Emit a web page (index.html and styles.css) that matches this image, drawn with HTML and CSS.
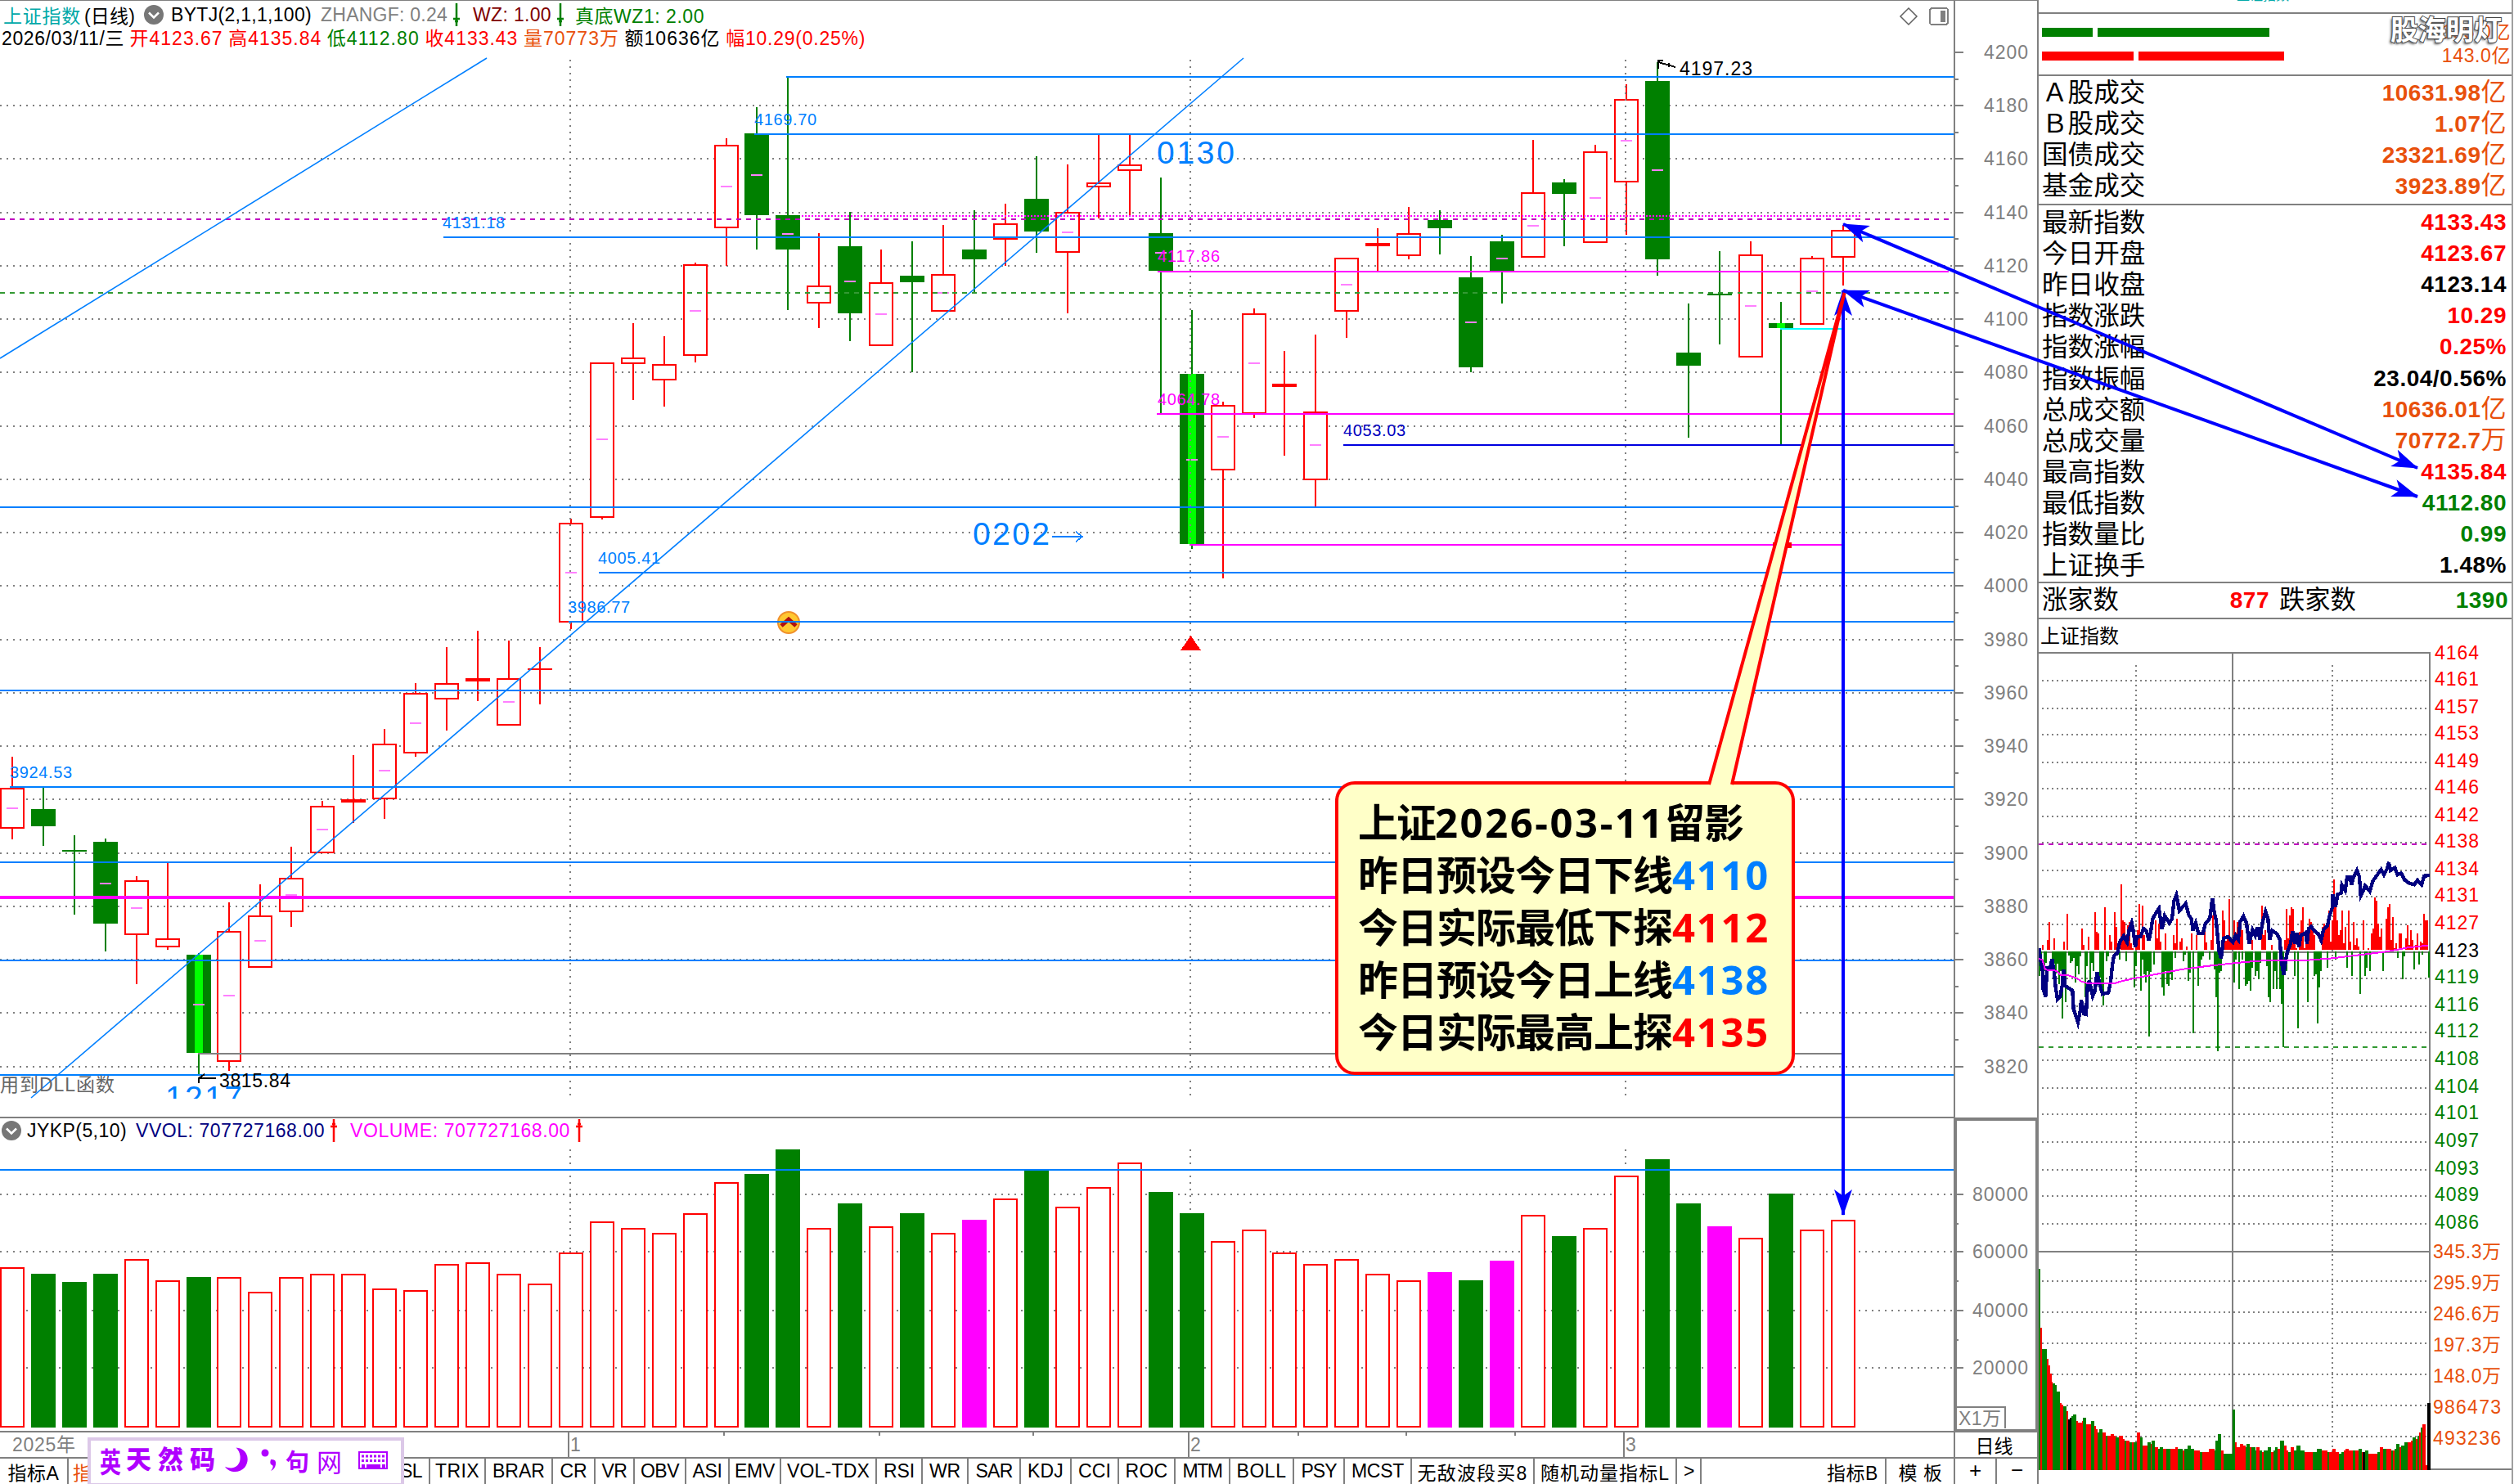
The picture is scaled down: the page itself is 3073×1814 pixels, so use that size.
FILE: index.html
```html
<!DOCTYPE html>
<html lang="zh-CN">
<head>
    <meta charset="UTF-8">
    <meta name="viewport" content="width=device-width, initial-scale=1.0">
    <title>上证指数 (日线)</title>
    <link rel="stylesheet" href="styles.css">
</head>
<body>
    <div class="app">
        <section class="panel main-panel">
            <svg id="kline" class="plot" viewBox="0 1 2388 1364" width="2388" height="1364"></svg>
            <div class="legend">
                <div class="legend-row">
                    <span class="teal" data-w="95">上证指数</span>
                    <span class="ml-4" data-w="62">(日线)</span>
                    <svg class="drop ml-11" viewBox="0 0 24 24"><circle cx="12" cy="12" r="12"/><path d="M6 9.500l6 6 6-6"/></svg>
                    <span class="ml-9" data-w="172">BYTJ(2,1,1,100)</span>
                    <span class="gray ml-11" data-w="155">ZHANGF: 0.24</span>
                    <svg class="arrow green ml-4" viewBox="0 0 14 28"><path d="M7 0v28M3 19h8M5 22h4"/></svg>
                    <span class="maroon ml-13" data-w="96">WZ: 1.00</span>
                    <svg class="arrow green ml-4" viewBox="0 0 14 28"><path d="M7 0v28M3 19h8M5 22h4"/></svg>
                    <span class="green ml-11" data-w="158">真底WZ1: 2.00</span>
                </div>
                <div class="legend-row quote">
                    <span data-w="150">2026/03/11/三</span>
                    <span class="red" data-w="114">开4123.67</span>
                    <span class="red" data-w="114">高4135.84</span>
                    <span class="green" data-w="113">低4112.80</span>
                    <span class="red" data-w="114">收4133.43</span>
                    <span class="orange" data-w="117">量70773万</span>
                    <span data-w="117">额10636亿</span>
                    <span class="red" data-w="171">幅10.29(0.25%)</span>
                </div>
            </div>
        </section>
        <section class="price-axis">
            <svg id="price-axis" class="plot" viewBox="2390 0 100 1367" width="100" height="1367"></svg>
        </section>

        <section class="panel volume-panel">
            <svg id="volume" class="plot" viewBox="0 1367 2388 382" width="2388" height="382"></svg>
            <div class="legend">
                <div class="legend-row">
                    <svg class="drop" viewBox="0 0 24 24"><circle cx="12" cy="12" r="12"/><path d="M6 9.500l6 6 6-6"/></svg>
                    <span class="ml-7" data-w="122">JYKP(5,10)</span>
                    <span class="navy ml-11" data-w="231">VVOL: 707727168.00</span>
                    <svg class="arrow red ml-4" viewBox="0 0 14 28"><path d="M7 0v28M3 9h8M5 6h4"/></svg>
                    <span class="magenta ml-13" data-w="269">VOLUME: 707727168.00</span>
                    <svg class="arrow red ml-4" viewBox="0 0 14 28"><path d="M7 0v28M3 9h8M5 6h4"/></svg>
                </div>
            </div>
        </section>
        <section class="volume-axis">
            <svg id="volume-axis" class="plot" viewBox="2392 1370 97 376" width="97" height="376"></svg>
        </section>

        <section class="dates">
            <svg id="dates" class="plot" viewBox="0 1751 2388 30" width="2388" height="30"></svg>
        </section>
        <section class="period">日线</section>

        <nav class="tabs" id="tabs"></nav>
        <section class="zoomer"><span>+</span><span>−</span></section>

        <aside class="side">
            <div class="side-code"><span>上证指数</span></div>
            <div class="flow">
                <div class="flow-row"><i class="bar bar-g1"></i><i class="bar bar-g2"></i><span>135.0亿</span></div>
                <div class="flow-row"><i class="bar bar-r1"></i><i class="bar bar-r2"></i><span>143.0亿</span></div>
                <div class="watermark">股海明灯</div>
            </div>
            <dl class="stats turnover">
                <div><dt>Ａ股成交</dt><dd class="orange">10631.98<small>亿</small></dd></div>
                <div><dt>Ｂ股成交</dt><dd class="orange">1.07<small>亿</small></dd></div>
                <div><dt>国债成交</dt><dd class="orange">23321.69<small>亿</small></dd></div>
                <div><dt>基金成交</dt><dd class="orange">3923.89<small>亿</small></dd></div>
            </dl>
            <dl class="stats index">
                <div><dt>最新指数</dt><dd class="red">4133.43</dd></div>
                <div><dt>今日开盘</dt><dd class="red">4123.67</dd></div>
                <div><dt>昨日收盘</dt><dd>4123.14</dd></div>
                <div><dt>指数涨跌</dt><dd class="red">10.29</dd></div>
                <div><dt>指数涨幅</dt><dd class="red">0.25%</dd></div>
                <div><dt>指数振幅</dt><dd>23.04/0.56%</dd></div>
                <div><dt>总成交额</dt><dd class="orange">10636.01<small>亿</small></dd></div>
                <div><dt>总成交量</dt><dd class="orange">70772.7<small>万</small></dd></div>
                <div><dt>最高指数</dt><dd class="red">4135.84</dd></div>
                <div><dt>最低指数</dt><dd class="green">4112.80</dd></div>
                <div><dt>指数量比</dt><dd class="green">0.99</dd></div>
                <div><dt>上证换手</dt><dd>1.48%</dd></div>
            </dl>
            <div class="breadth">
                <span>涨家数</span><b class="red">877</b>
                <span>跌家数</span><b class="green">1390</b>
            </div>
            <div class="mini-title">上证指数</div>
            <svg id="intraday" class="plot" viewBox="2492 785 578 1029" width="578" height="1029"></svg>
        </aside>

        <!-- annotations over the charts -->
        <svg class="notes" viewBox="0 0 3073 1814">
            <defs>
                <marker id="tip" markerUnits="userSpaceOnUse" markerWidth="32" markerHeight="24" refX="31" refY="12" orient="auto-start-reverse">
                    <path d="M32 12L0 1L8 12L0 23Z"/>
                </marker>
            </defs>
            <path class="link" d="M2253 274L2955 572"/>
            <path class="link" d="M2253 355L2955 607"/>
            <path class="link" d="M2253 355V1485"/>
        </svg>
        <div class="callout">
            <p><span data-w="94">上证</span><span data-w="281">2026-03-11</span><span data-w="96">留影</span></p>
            <p><span data-w="384">昨日预设今日下线</span><b class="sky" data-w="119">4110</b></p>
            <p><span data-w="384">今日实际最低下探</span><b class="red" data-w="119">4112</b></p>
            <p><span data-w="384">昨日预设今日上线</span><b class="sky" data-w="119">4138</b></p>
            <p><span data-w="384">今日实际最高上探</span><b class="red" data-w="119">4135</b></p>
        </div>
        <svg class="notes" viewBox="0 0 3073 1814">
            <rect x="2167" y="663" width="23" height="7" fill="#f00"/>
            <path class="pointer" d="M2089 959L2254.500 358L2117 959"/>
        </svg>

        <div class="ime">
            <span class="ime-en">英</span>
            <span class="ime-name">天然码</span>
            <svg class="ime-moon" viewBox="0 0 30 32"><path d="M14 0C27 1 33 14 25 25C18 33 5 32 0 24C9 28 17 25 19 16C20 9 18 4 14 0Z"/></svg>
            <svg class="ime-punct" viewBox="0 0 20 28"><circle cx="5" cy="5" r="4.500"/><path d="M12 13q7-1 6 6q-1 6-6 8q4-5 2-7q-4-1-2-7z"/></svg>
            <span class="ime-sent">句</span>
            <span class="ime-net">网</span>
            <svg class="ime-keys" viewBox="0 0 36 22"><path d="M1 1h34v20H1z" fill="none" stroke="#b000ff" stroke-width="2"/><path d="M4 6h28M4 11.500h28" fill="none" stroke="#b000ff" stroke-width="3" stroke-dasharray="3 2"/><path d="M4 16h4v4H4zM10 16h17v4H10zM29 16h4v4h-4z"/></svg>
        </div>
    </div>
    <script src="chart.js"></script>
</body>
</html>
```

FILE: styles.css
```css
* {
    box-sizing: border-box;
}
body {
    margin: 0;
    background: #fff;
    color: #000;
    font-family: "Liberation Sans", "Noto Sans CJK SC", sans-serif;
    font-size: 23px;
}
p, dl, dd {
    margin: 0;
}
.app {
    position: relative;
    display: grid;
    grid-template-columns: 2390px 100px 583px;
    grid-template-rows: 1367px 384px 32px 31px;
    width: 3073px;
    height: 1814px;
    overflow: hidden;
}
.plot {
    display: block;
    shape-rendering: crispEdges;
}
.red { color: #f00; }
.green { color: #008000; }
.orange { color: #e8500c; }
.gray { color: #808080; }
.teal { color: #00a8a8; }
.maroon { color: #800000; }
.navy { color: #000080; }
.magenta { color: #f0f; }
.sky { color: #007fff; }

/* chart panels: plot and legend share one cell */
.panel {
    display: grid;
    border-right: 2px solid #808080;
    border-bottom: 2px solid #808080;
}
.panel > * {
    grid-area: 1 / 1;
}
.main-panel {
    border-top: 1px solid #808080;
}
.legend {
    padding: 3px 0 0 4px;
    z-index: 1;
}
.volume-panel .legend {
    padding: 1px 0 0 2px;
}
.legend-row {
    display: flex;
    align-items: center;
    height: 28px;
    white-space: nowrap;
}
.quote {
    gap: 6.6px;
    margin: -1px 0 0 -2px;
}
.ml-4 { margin-left: 4px; }
.ml-7 { margin-left: 7px; }
.ml-9 { margin-left: 9px; }
.ml-11 { margin-left: 11px; }
.ml-13 { margin-left: 13px; }
.drop {
    width: 24px;
    height: 24px;
    fill: #777;
}
.drop path {
    fill: none;
    stroke: #fff;
    stroke-width: 2.5;
}
.arrow {
    width: 14px;
    height: 28px;
    fill: none;
    stroke: currentColor;
    stroke-width: 2.5;
}

/* axes */
.price-axis {
    border-top: 1px solid #808080;
    margin-bottom: -1px;
}
.price-axis .plot {
    margin-top: -1px;
}
.volume-axis {
    margin: -1px -2px 0 -2px;
    border: 4px solid #808080;
    overflow: hidden;
    z-index: 1;
}
.dates {
    border-right: 2px solid #808080;
    border-bottom: 2px solid #808080;
}
.period {
    display: flex;
    align-items: center;
    justify-content: center;
    padding-right: 5px;
    border-bottom: 2px solid #808080;
}
.zoomer {
    display: flex;
    line-height: 28px;
    text-align: center;
    font-size: 26px;
}
.zoomer span {
    flex: 1;
}
.zoomer span:first-child {
    border-right: 2px solid #808080;
}

/* indicator tabs */
.tabs {
    display: flex;
    border-right: 2px solid #808080;
}
.tab {
    flex: none;
    display: flex;
    align-items: center;
    justify-content: center;
    border-right: 2px solid #808080;
    white-space: nowrap;
    overflow: hidden;
}
.tab:last-child {
    border-right: 0;
}
.tab.end {
    justify-content: flex-end;
    padding-right: 8px;
}
.tab.active {
    color: #e8500c;
    justify-content: flex-start;
    padding-left: 5px;
}

/* right column */
.side {
    grid-column: 3;
    grid-row: 1 / 5;
    display: grid;
    grid-template-rows: 17px 76px 158px 462px 44px 28px 1029px;
    border-left: 2px solid #808080;
    border-right: 2px solid #a0a0a0;
    margin-right: 1px;
}
.side-code {
    overflow: hidden;
    border-bottom: 2px solid #808080;
    color: #00a8a8;
    font-size: 16px;
    line-height: 16px;
}
.side-code span {
    display: block;
    margin: -13px 0 0 242px;
}
.flow {
    position: relative;
    border-bottom: 2px solid #808080;
    padding: 8px 1px 0 4px;
}
.flow-row {
    display: flex;
    align-items: center;
    height: 29px;
    color: #e8500c;
}
.flow-row span {
    margin: -6px 0 0 auto;
    letter-spacing: 0.6px;
}
.bar {
    height: 11px;
    margin-right: 6px;
}
.bar-g1 { width: 62px; background: #008000; }
.bar-g2 { width: 210px; background: #008000; }
.bar-r1 { width: 112px; background: #f00; }
.bar-r2 { width: 178px; background: #f00; }
.watermark {
    position: absolute;
    right: 12px;
    top: 0;
    line-height: 40px;
    font-size: 34px;
    font-weight: bold;
    color: #fff;
    -webkit-text-stroke: 2px #444;
    paint-order: stroke fill;
    text-shadow: -2px 2px 3px #555;
}
.stats {
    border-bottom: 2px solid #808080;
    padding: 1px 6px 0 4px;
}
.stats div {
    display: flex;
    justify-content: space-between;
    align-items: center;
    height: 38.1px;
}
.stats dt {
    font-size: 31.6px;
    line-height: 38px;
}
.stats dd {
    font-size: 28px;
    font-weight: bold;
    letter-spacing: 0.5px;
    line-height: 38px;
}
.index {
    padding-top: 2px;
}
.stats small {
    font-size: 31px;
    font-weight: normal;
}
.breadth {
    display: grid;
    grid-template-columns: 94px 184px 106px 1fr;
    align-items: center;
    padding: 0 4px;
    border-bottom: 2px solid #808080;
    font-size: 31.3px;
    line-height: 38px;
}
.breadth b {
    text-align: right;
    font-size: 28px;
    letter-spacing: 0.5px;
}
.breadth span + b + span {
    padding-left: 12px;
}
.mini-title {
    padding-left: 2px;
    font-size: 24px;
    line-height: 42px;
}

/* overlays */
.notes {
    position: absolute;
    left: 0;
    top: 0;
    width: 3073px;
    height: 1814px;
    z-index: 3;
    pointer-events: none;
}
.notes marker path {
    fill: #00f;
}
.link {
    fill: none;
    stroke: #00f;
    stroke-width: 4;
    marker-start: url(#tip);
    marker-end: url(#tip);
}
.pointer {
    fill: #ffffc8;
    stroke: #f00;
    stroke-width: 4;
}
.callout {
    position: absolute;
    left: 1632px;
    top: 955px;
    width: 562px;
    height: 359px;
    z-index: 2;
    padding: 14px 0 0 24px;
    background: #ffffc8;
    border: 4px solid #f00;
    border-radius: 24px;
    font-family: "Noto Sans", "Noto Sans CJK SC", sans-serif;
    font-size: 49px;
    font-weight: bold;
    line-height: 64px;
    white-space: nowrap;
}
.callout p {
    display: flex;
    height: 64px;
}
.callout b {
    font-weight: inherit;
}
.ime {
    position: absolute;
    left: 107px;
    top: 1757px;
    width: 387px;
    height: 60px;
    z-index: 4;
    display: flex;
    align-items: center;
    padding: 0 16px 4px 11px;
    background: #fff;
    border: 4px solid #dcc8e8;
    color: #b000ff;
    fill: #b000ff;
    font-weight: bold;
}
.ime-en {
    font-size: 26px;
    transform: scaleY(1.3);
}
.ime-name {
    margin-left: 6px;
    font-size: 31px;
    letter-spacing: 8px;
    line-height: 34px;
    font-weight: 900;
}
.ime-moon {
    width: 29px;
    height: 32px;
    margin-left: 4px;
}
.ime-punct {
    width: 20px;
    height: 28px;
    margin-left: 15px;
}
.ime-sent {
    margin-left: 10px;
    font-size: 29px;
}
.ime-net {
    margin-left: 9px;
    font-size: 31px;
    font-weight: normal;
}
.ime-keys {
    width: 36px;
    height: 22px;
    margin-left: auto;
}
```

FILE: chart.js
```js
const NS = 'http://www.w3.org/2000/svg';
const RED = '#f00', GREEN = '#008000', LIME = '#0f0', BLUE = '#007fff';
const MAGENTA = '#f0f', GRAY = '#808080', PURPLE = '#c000c0', ORANGE = '#e8500c';

function add(parent, tag, attrs, text) {
    const el = document.createElementNS(NS, tag);
    for (const k in attrs) el.setAttribute(k, attrs[k]);
    if (text !== undefined) el.textContent = text;
    parent.appendChild(el);
    return el;
}
function line(p, x1, y1, x2, y2, stroke, width, dash) {
    const a = { x1, y1, x2, y2, stroke, 'stroke-width': width || 2 };
    if (dash) a['stroke-dasharray'] = dash;
    return add(p, 'line', a);
}
function rect(p, x, y, width, height, fill) {
    return add(p, 'rect', { x, y, width, height, fill });
}
// outlined body with a 2px border kept inside the box
function box(p, x, y, w, h) {
    return add(p, 'rect', { x: x + 1, y: y + 1, width: w - 2, height: Math.max(h - 2, 1), fill: '#fff', stroke: RED, 'stroke-width': 2 });
}
// left-aligned text, y is the baseline, width is the drawn length
function label(p, x, y, str, fill, size, width) {
    const a = { x, y, fill, 'font-size': size };
    if (width) a.textLength = width;
    return add(p, 'text', a, str);
}

const slot = i => Math.round(14.9 + i * 37.94);

// [type, high, body top, body bottom, low, middle mark]
const candles = [
    ['r', 925, 963, 1013, 1026, 988], ['g', 962, 989, 1010, 1034], ['g', 1021, 1039, 1041, 1118],
    ['g', 1025, 1029, 1129, 1163, 1080], ['r', 1071, 1076, 1143, 1203, 1110], ['r', 1055, 1147, 1158, 1161],
    ['b', 1165, 1167, 1287, 1313, 1228], ['r', 1103, 1138, 1298, 1309, 1217], ['r', 1081, 1119, 1183, 1183, 1150],
    ['r', 1035, 1073, 1115, 1133, 1094], ['r', 979, 985, 1043, 1043, 1014], ['f', 923, 977, 981, 1006],
    ['r', 891, 909, 977, 1001, 942], ['r', 835, 847, 921, 925, 884], ['r', 791, 835, 855, 893],
    ['f', 771, 829, 833, 857], ['r', 783, 829, 887, 887, 858], ['f', 791, 817, 819, 861],
    ['r', 634, 639, 761, 769, 700], ['r', 443, 443, 633, 635, 537], ['r', 395, 437, 445, 489],
    ['r', 411, 445, 465, 497], ['r', 321, 323, 435, 443, 380], ['r', 169, 177, 279, 325, 228],
    ['g', 131, 163, 263, 305, 214], ['g', 94, 263, 305, 379, 286], ['r', 285, 349, 371, 401],
    ['g', 259, 301, 383, 417, 344], ['r', 305, 345, 423, 423, 384], ['g', 295, 337, 345, 455],
    ['r', 275, 335, 381, 381, 358], ['g', 257, 305, 317, 357], ['r', 249, 273, 293, 325],
    ['g', 191, 243, 283, 309], ['r', 201, 259, 309, 383, 284], ['r', 165, 223, 229, 267],
    ['r', 165, 201, 209, 263], ['g', 217, 285, 331, 505, 309], ['b', 379, 457, 665, 671, 562],
    ['r', 491, 495, 575, 707, 534], ['r', 377, 383, 506, 511, 444], ['f', 429, 469, 473, 557],
    ['r', 409, 503, 587, 620, 544], ['r', 315, 315, 381, 413, 348], ['f', 279, 297, 301, 331],
    ['r', 253, 285, 313, 317], ['g', 257, 269, 279, 311], ['g', 313, 339, 449, 455, 394],
    ['g', 287, 295, 331, 371, 316], ['r', 171, 235, 315, 315, 276], ['g', 219, 223, 237, 301],
    ['r', 177, 185, 297, 297, 242], ['r', 103, 121, 223, 287, 172], ['g', 76, 99, 317, 337, 208],
    ['g', 371, 431, 447, 535], ['g', 307, 359, 361, 421], ['r', 295, 311, 437, 437, 374],
    ['b', 369, 395, 401, 543], ['r', 313, 315, 397, 397, 356], ['r', 275, 281, 315, 349]
];

// [type, top of the bar]
const volumes = [
    ['r', 1549], ['g', 1557], ['g', 1567], ['g', 1557], ['r', 1539], ['r', 1565], ['g', 1561], ['r', 1561],
    ['r', 1579], ['r', 1561], ['r', 1557], ['r', 1557], ['r', 1575], ['r', 1577], ['r', 1545], ['r', 1543],
    ['r', 1557], ['r', 1569], ['r', 1531], ['r', 1493], ['r', 1501], ['r', 1507], ['r', 1483], ['r', 1445],
    ['g', 1435], ['g', 1405], ['r', 1501], ['g', 1471], ['r', 1499], ['g', 1483], ['r', 1507], ['m', 1491],
    ['r', 1465], ['g', 1430], ['r', 1475], ['r', 1451], ['r', 1421], ['g', 1457], ['g', 1483], ['r', 1517],
    ['r', 1503], ['r', 1531], ['r', 1545], ['r', 1539], ['r', 1557], ['r', 1565], ['m', 1555], ['g', 1565],
    ['m', 1541], ['r', 1485], ['g', 1511], ['r', 1501], ['r', 1437], ['g', 1417], ['g', 1471], ['m', 1499],
    ['r', 1513], ['g', 1459], ['r', 1503], ['r', 1491]
];
const months = [697, 1455, 1987];
const priceY = v => Math.round(64 + (4200 - v) * 3.2624);

function drawKline() {
    const s = document.getElementById('kline');
    for (let v = 4180; v >= 3820; v -= 20) line(s, 0, priceY(v), 2388, priceY(v), GRAY, 2, '2 6');

    candles.forEach(([t, hi, top, bot, lo, mid], i) => {
        const x = slot(i);
        const color = t === 'g' || t === 'b' ? GREEN : RED;
        line(s, x, hi, x, lo, color);
        if (t === 'r') box(s, x - 15, top, 30, bot - top);
        else rect(s, x - 15, top, 30, bot - top, color);
        if (t === 'b') rect(s, x - 5, top, 10, bot - top, LIME);
        if (mid) rect(s, x - 7, mid - 1, 14, 2, '#ff80ff');
    });
    months.forEach(x => line(s, x, 73, x, 1341, GRAY, 2, '2 6'));

    // horizontal levels: x from, x to, y, colour
    [
        [961, 2388, 94], [922, 2388, 164], [542, 2388, 290], [0, 2388, 620], [732, 2388, 700],
        [695, 2388, 760], [0, 2388, 844], [12, 2388, 962], [0, 2388, 1054], [0, 2388, 1174], [0, 2388, 1314],
        [242, 2252, 1288, GRAY], [1415, 2382, 332, MAGENTA], [1414, 2388, 506, MAGENTA],
        [1455, 2252, 666, MAGENTA], [1642, 2388, 544, '#0000e0'], [2176, 2252, 402, '#0ff']
    ].forEach(([a, b, y, c]) => line(s, a, y, b, y, c || BLUE));
    line(s, 0, 1097, 2388, 1097, MAGENTA, 4);
    line(s, 0, 268, 2384, 268, PURPLE, 2, '6 6');
    line(s, 980, 264, 2275, 264, MAGENTA, 2, '2 2');
    line(s, 0, 358, 2384, 358, '#339933', 2, '6 6');
    line(s, 0, 438, 595, 71, BLUE, 1.6).setAttribute('shape-rendering', 'auto');
    line(s, 38, 1342, 1520, 71, BLUE, 1.6).setAttribute('shape-rendering', 'auto');

    label(s, 922, 153, '4169.70', BLUE, 20, 76);
    label(s, 541, 279, '4131.18', BLUE, 20, 76);
    label(s, 731, 689, '4005.41', BLUE, 20, 76);
    label(s, 694, 749, '3986.77', BLUE, 20, 76);
    label(s, 12, 951, '3924.53', BLUE, 20, 76);
    label(s, 1415, 320, '4117.86', MAGENTA, 20, 76);
    label(s, 1415, 495, '4064.78', MAGENTA, 20, 76);
    label(s, 1642, 533, '4053.03', '#0000c0', 20, 76);
    label(s, 2053, 92, '4197.23', '#000', 23, 89);
    label(s, 268, 1329, '3815.84', '#000', 23, 87);
    label(s, 0, 1334, '用到DLL函数', '#666', 23, 140);
    label(s, 1414, 200, '0130', BLUE, 39, 95);
    label(s, 1189, 666, '0202', BLUE, 39, 94);
    add(s, 'path', { d: 'M1286 656H1323M1315 650L1323 656L1315 662', fill: 'none', stroke: BLUE, 'stroke-width': 1.5 });
    add(s, 'path', { d: 'M2048 82L2027 76M2027 84V74H2033M2040 77V82', fill: 'none', stroke: '#000', 'stroke-width': 2 });
    add(s, 'path', { d: 'M264 1318H243M250 1313L243 1318V1324', fill: 'none', stroke: '#000', 'stroke-width': 2 });

    // date tag cut off at the bottom of the plot
    const clip = add(s, 'clipPath', { id: 'cut' });
    rect(clip, 190, 1300, 120, 43);
    label(s, 202, 1355, '1217', BLUE, 39, 94).setAttribute('clip-path', 'url(#cut)');

    add(s, 'path', { d: 'M1455.500 777L1468 795H1443Z', fill: RED });
    const sun = add(s, 'g', { 'shape-rendering': 'auto' });
    add(sun, 'circle', { cx: 964, cy: 761, r: 13, fill: '#ffc830', stroke: '#f0902c', 'stroke-width': 2 });
    add(sun, 'path', { d: 'M955 765L964 757L973 765', fill: 'none', stroke: '#b01010', 'stroke-width': 5 });
    line(s, 950, 760, 978, 760, BLUE);

    add(s, 'path', { d: 'M2333 10L2343 20L2333 30L2323 20Z', fill: 'none', stroke: '#606060', 'stroke-width': 1.5, 'shape-rendering': 'auto' });
    add(s, 'rect', { x: 2359, y: 10, width: 22, height: 20, rx: 3, fill: '#fff', stroke: '#808080', 'stroke-width': 2 });
    rect(s, 2372, 13, 6, 14, GRAY);
}

function drawPriceAxis() {
    const s = document.getElementById('price-axis');
    for (let v = 4200; v >= 3820; v -= 10) {
        const y = priceY(v);
        line(s, 2390, y, v % 20 ? 2394 : 2400, y, GRAY);
        if (v % 20 === 0) label(s, 2425, y + 8, v, GRAY, 23, 54);
    }
}

function drawVolume() {
    const s = document.getElementById('volume');
    months.forEach(x => line(s, x, 1405, x, 1745, GRAY, 2, '2 6'));
    [1460, 1530, 1602, 1672].forEach(y => line(s, 0, y, 2388, y, GRAY, 2, '2 6'));
    volumes.forEach(([t, top], i) => {
        const x = slot(i) - 15;
        if (t === 'r') box(s, x, top, 30, 1745 - top);
        else rect(s, x, top, 30, 1745 - top, t === 'g' ? GREEN : MAGENTA);
    });
    line(s, 0, 1430, 2388, 1430, BLUE);

    const a = document.getElementById('volume-axis');
    [80000, 60000, 40000, 20000].forEach((v, i) => {
        const y = [1460, 1530, 1602, 1672][i];
        line(a, 2390, y, 2400, y, GRAY);
        if (i < 3) line(a, 2390, y + 36, 2394, y + 36, GRAY);
        label(a, 2411, y + 8, v, GRAY, 23, 68);
    });
    add(a, 'rect', { x: 2391, y: 1720, width: 60, height: 40, fill: 'none', stroke: GRAY, 'stroke-width': 2 });
    label(a, 2394, 1742, 'X1万', GRAY, 23, 52);
}

function drawDates() {
    const s = document.getElementById('dates');
    label(s, 15, 1774, '2025年', GRAY, 23, 77);
    [695, 1453, 1985].forEach((x, i) => {
        line(s, x, 1751, x, 1781, GRAY);
        label(s, x + 2, 1774, i + 1, GRAY, 23);
    });
    [885, 1075, 1263, 1587, 1719, 1852].forEach(x => line(s, x, 1751, x, 1755, GRAY));
}

// [label, tab width, text width]
function drawTabs() {
    const tabs = [
        ['指标A', 84, 63], ['指', 410, 24, 'active'], ['SL', 32, 27, 'end'],
        ['TRIX', 68, 54], ['BRAR', 82, 64], ['CR', 52, 33], ['VR', 48, 31],
        ['OBV', 63, 47], ['ASI', 53, 36], ['EMV', 63, 49], ['VOL-TDX', 117, 101], ['RSI', 56, 38],
        ['WR', 56, 38], ['SAR', 64, 45], ['KDJ', 62, 44], ['CCI', 58, 40], ['ROC', 69, 52], ['MTM', 67, 48],
        ['BOLL', 78, 61], ['PSY', 62, 43], ['MCST', 82, 64], ['无敌波段买8', 150, 135], ['随机动量指标L', 174, 158],
        ['>', 30, 12], ['指标B', 226, 63, 'end'], ['模 板', 83, 54]
    ];
    const nav = document.getElementById('tabs');
    tabs.forEach(([name, width, text, cls]) => {
        const tab = document.createElement('div');
        tab.className = 'tab ' + (cls || '');
        tab.style.width = width + 'px';
        const span = document.createElement('span');
        span.textContent = name;
        span.dataset.w = text;
        tab.appendChild(span);
        nav.appendChild(tab);
    });
}

// intraday curve and order pressure, on a 3x grid
const curve = '8,358 12,395 20,440 22,505 32,535 36,430 48,430 55,398 62,440 68,500 75,545 85,535 92,495 97,435 103,495 118,505 130,512 134,580 142,605 150,630 158,590 162,548 172,598 180,600 185,500 192,475 204,533 212,515 220,445 230,490 240,525 262,520 270,480 276,420 282,385 295,375 303,335 318,312 330,335 338,290 347,265 354,300 360,353 366,315 380,315 390,285 402,295 410,330 418,290 424,250 435,230 447,212 458,288 468,238 485,265 495,250 502,185 511,162 522,220 545,193 556,235 566,250 572,292 582,265 592,303 608,303 617,268 634,247 643,175 650,225 656,250 662,310 668,370 675,395 684,320 700,315 718,335 728,310 738,325 745,260 757,240 768,265 778,340 790,290 800,310 808,280 817,325 826,265 838,222 847,250 853,325 862,292 880,305 890,325 896,400 904,455 912,400 918,370 930,340 937,295 945,340 952,300 960,352 968,310 985,300 990,340 996,285 1005,278 1018,295 1032,305 1042,328 1050,290 1065,275 1072,240 1082,210 1085,160 1095,205 1102,160 1115,155 1118,125 1130,145 1137,97 1148,97 1153,125 1160,97 1173,72 1182,95 1187,165 1195,150 1203,128 1220,148 1232,110 1248,88 1262,68 1272,88 1284,65 1290,42 1296,72 1312,62 1322,88 1335,82 1347,105 1360,117 1383,124 1395,108 1410,124 1420,92 1440,90';
const average = '6,396 20,400 30,436 70,440 85,455 115,457 140,465 165,480 185,486 285,486 310,478 370,465 440,452 530,435 630,422 760,408 840,402 980,402 1085,394 1190,381 1280,370 1360,355 1435,347';
const buys = '21,345 39,327 45,262 63,321 99,333 111,232 165,286 171,345 189,315 213,225 219,297 225,303 249,208 267,309 273,333 285,225 291,279 297,339 309,124 315,256 321,262 327,310 333,273 339,262 345,339 351,357 363,320 369,291 375,196 387,202 393,310 435,255 441,321 447,268 453,333 471,303 501,309 507,339 513,250 525,333 531,321 549,351 567,303 585,309 615,291 621,335 639,327 645,238 681,220 687,256 693,330 699,310 705,178 711,320 717,330 723,256 729,300 735,262 741,300 747,262 753,291 789,327 825,202 831,310 837,291 861,345 909,327 915,214 921,320 927,238 933,208 939,214 945,340 951,357 963,297 969,256 975,208 981,357 987,330 993,310 999,250 1005,262 1011,291 1017,310 1047,280 1053,268 1059,285 1065,256 1071,220 1077,333 1083,256 1089,106 1095,208 1101,256 1107,309 1113,291 1119,220 1125,339 1131,280 1143,220 1149,333 1161,262 1167,345 1173,321 1179,351 1197,256 1215,357 1227,303 1233,286 1239,172 1245,184 1251,268 1257,315 1263,286 1281,250 1287,208 1293,196 1299,327 1305,244 1311,357 1317,339 1329,303 1335,303 1353,321 1359,273 1365,345 1371,291 1377,327 1389,345 1395,303 1407,333 1413,339 1419,232 1425,256 1431,256';
const sells = '9,459 15,380 27,440 33,411 57,400 63,415 69,450 75,415 81,488 87,440 93,615 99,490 105,554 117,385 123,411 129,405 135,393 141,483 147,423 153,452 159,387 177,536 183,423 195,480 201,411 207,440 231,465 237,500 243,566 255,405 261,387 303,399 327,405 357,500 363,423 381,512 387,399 393,452 399,483 405,440 411,680 417,445 429,417 459,500 465,530 471,440 477,488 483,494 489,452 495,475 507,393 537,405 543,381 555,476 561,446 573,668 591,494 597,427 603,399 609,387 633,400 651,435 657,536 663,734 669,446 675,440 723,483 729,399 741,506 753,399 765,494 771,488 777,476 783,512 789,429 801,458 807,440 813,470 819,411 843,423 849,536 855,554 867,506 873,440 879,506 891,506 897,560 903,720 915,440 945,459 957,650 993,554 1017,458 1023,452 1029,632 1035,500 1041,440 1065,429 1095,399 1137,429 1155,458 1185,524 1203,458 1209,429 1221,440 1269,440 1323,393 1341,470 1347,387 1383,435 1401,417 1413,381 1437,465';

// minute volume as runs: colour, start, top; each run ends where the next begins
const runs = 'g253,753 r257,969 g262,1047 r275,1083 r280,1107 r285,1137 r289,1167 g292,1173 g299,1179 g303,1203 r311,1245 r316,1251 g321,1257 r330,1275 k335,1305 k340,1299 g344,1293 g349,1287 r356,1311 r362,1317 r372,1311 g376,1299 r385,1323 g398,1311 r407,1329 r411,1341 g415,1353 g421,1341 r430,1353 g439,1365 r443,1365 r453,1359 r462,1365 g466,1371 r475,1365 r485,1377 g490,1383 r495,1383 g503,1389 r511,1389 g516,1389 r525,1353 g534,1371 r539,1401 g553,1389 r562,1395 g566,1383 r575,1407 g582,1413 g588,1407 r597,1413 g606,1413 r616,1413 r630,1407 g637,1413 r650,1419 g656,1413 g665,1401 g674,1413 r683,1419 g699,1425 r706,1425 r724,1413 g738,1419 g742,1383 g748,1359 r756,1419 g764,1431 g788,1269 r796,1389 r801,1407 r810,1395 r819,1401 g824,1407 g828,1395 r837,1407 g841,1407 g851,1419 r855,1407 g864,1419 r869,1425 g874,1419 g887,1407 r895,1425 g901,1419 g906,1407 r914,1413 g919,1383 r931,1401 r937,1419 g942,1425 r950,1407 g959,1419 g965,1401 g977,1419 r987,1425 g1010,1425 g1022,1413 r1036,1419 g1050,1425 r1056,1425 r1064,1413 r1073,1425 g1082,1431 g1089,1425 r1095,1419 r1100,1413 r1109,1419 g1122,1419 r1128,1419 g1136,1413 r1145,1425 k1149,1425 g1154,1419 r1163,1431 g1188,1425 r1195,1407 g1204,1413 r1213,1413 g1226,1419 r1231,1419 g1236,1413 g1240,1395 r1249,1407 g1254,1401 g1263,1389 r1272,1389 r1281,1383 g1286,1371 r1295,1377 g1300,1365 r1304,1353 g1309,1335 r1313,1323 r1321,1473 k1327,1245';

function drawIntraday() {
    const s = document.getElementById('intraday');
    const dotted = [832, 866, 898, 932, 964, 998, 1030, 1064, 1096, 1130, 1196, 1230, 1262, 1296, 1330, 1362,
        1396, 1430, 1462, 1496, 1566, 1604, 1642, 1680, 1718, 1756];
    dotted.forEach(y => line(s, 2496, y, 2968, y, GRAY, 2, '2 4'));
    [2611, 2851].forEach(x => line(s, x, 813, x, 1796, GRAY, 2, '2 4'));
    line(s, 2492, 798, 2971, 798, GRAY);
    line(s, 2492, 1530, 2971, 1530, GRAY);
    line(s, 2729, 798, 2729, 1796, GRAY);
    line(s, 2970, 798, 2970, 1796, GRAY);
    line(s, 2970, 1796, 3070, 1796, GRAY);
    line(s, 2492, 1164, 2970, 1164, GRAY);
    line(s, 2492, 1032, 2968, 1032, PURPLE, 2, '6 6');
    line(s, 2492, 1280, 2968, 1280, '#339933', 2, '6 6');

    const g = add(s, 'g', { transform: 'translate(2490 1040) scale(0.33333)' });
    const pairs = str => str.split(' ').map(p => p.split(',').map(Number));
    pairs(buys).forEach(([x, y]) => rect(g, x - 3, y, 6, 363 - y, RED));
    pairs(sells).forEach(([x, y]) => rect(g, x - 3, 370, 6, y - 370, GREEN));
    add(g, 'polyline', { points: curve, fill: 'none', stroke: '#000080', 'stroke-width': 13 });
    add(g, 'polyline', { points: average, fill: 'none', stroke: MAGENTA, 'stroke-width': 6 });

    const v = add(s, 'g', { transform: 'translate(2380 1300) scale(0.4425 0.33333)' });
    const colors = { r: RED, g: GREEN, k: '#000' };
    const list = runs.split(' ');
    list.forEach((run, i) => {
        const [x, top] = run.slice(1).split(',').map(Number);
        const next = list[i + 1] ? parseInt(list[i + 1].slice(1)) : 1335;
        rect(v, x, top, next - x, 1491 - top, colors[run[0]]);
    });

    const prices = [4164, 4161, 4157, 4153, 4149, 4146, 4142, 4138, 4134, 4131, 4127, 4123, 4119, 4116, 4112, 4108,
        4104, 4101, 4097, 4093, 4089, 4086];
    const ys = [798, 830, 864, 896, 930, 962, 996, 1028, 1062, 1094, 1128, 1162, 1194, 1228, 1260, 1294,
        1328, 1360, 1394, 1428, 1460, 1494];
    prices.forEach((p, i) => label(s, 2976, ys[i] + 8, p, p > 4123 ? RED : p < 4123 ? GREEN : '#000', 23, 54));
    ['345.3万', '295.9万', '246.6万', '197.3万', '148.0万', '986473', '493236'].forEach((t, i) => {
        label(s, 2974, 1538 + i * 38, t, ORANGE, 23, 83);
    });
}

// spread each text over the width given in data-w
function fitTexts() {
    document.querySelectorAll('[data-w]').forEach(el => {
        const w = Number(el.dataset.w);
        const natural = el.getBoundingClientRect().width;
        el.style.letterSpacing = (w - natural) / el.textContent.length + 'px';
    });
}

drawKline();
drawPriceAxis();
drawVolume();
drawDates();
drawTabs();
drawIntraday();
fitTexts();
```
